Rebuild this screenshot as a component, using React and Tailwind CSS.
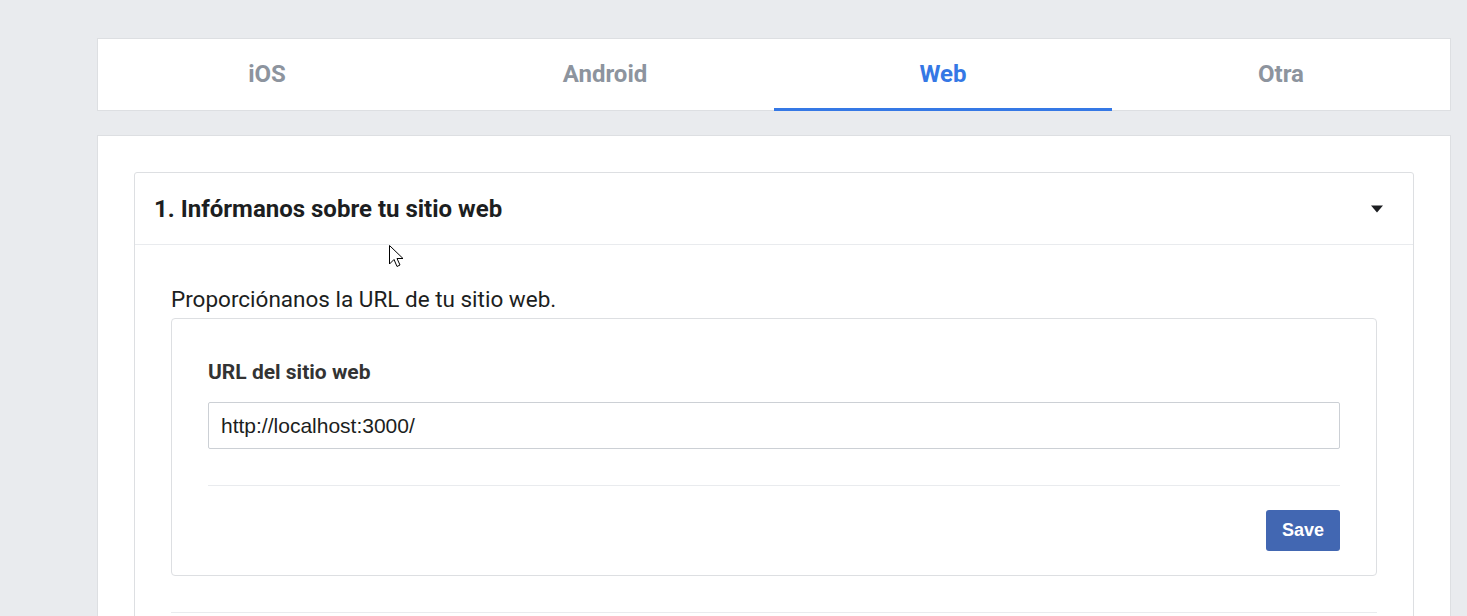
import React from "react";

export default function App() {
  const tabs = ["iOS", "Android", "Web", "Otra"];
  return (
    <div className="relative w-[1467px] h-[616px] overflow-hidden bg-[#e9ebee] font-['Roboto',sans-serif]">
      <div className="pt-[38px] pl-[97px] pr-[16px]">
        <div className="flex h-[73px] border border-[#dddfe2] bg-white">
          {tabs.map((t) => (
            <div
              key={t}
              className={
                "flex-1 -mb-px flex items-center justify-center text-[24px] leading-[28px] font-bold border-b-[3px] " +
                (t === "Web" ? "text-[#3578e5] border-[#3578e5]" : "text-[#8d949e] border-transparent")
              }
            >
              <span>{t}</span>
            </div>
          ))}
        </div>
        <div className="mt-[24px] h-[600px] border border-[#dddfe2] bg-white px-[36px] pt-[36px]">
          <div className="border border-[#dddfe2] rounded-[3px] h-[600px]">
            <div className="flex items-center justify-between h-[72px] pl-[19px] pr-[29px] border-b border-[#e9ebee]">
              <span className="text-[24px] leading-[28px] font-bold text-[#1c1e21]">1. Infórmanos sobre tu sitio web</span>
              <svg width="14" height="8" viewBox="0 0 14 8">
                <path d="M1 0.5 L13 0.5 L7 7.5 Z" fill="#1c1e21" />
              </svg>
            </div>
            <div className="px-[36px] pt-[40px]">
              <div className="text-[22.5px] text-[#1c1e21] leading-[28px]">Proporciónanos la URL de tu sitio web.</div>
              <div className="mt-[5px] border border-[#dddfe2] rounded-[4px] px-[36px] pt-[41px] pb-[24px]">
                <div className="text-[21px] font-bold text-[#333] leading-[24px]">URL del sitio web</div>
                <input
                  readOnly
                  value="http://localhost:3000/"
                  className="mt-[18px] block w-full h-[47px] border border-[#ccd0d5] rounded-[2px] px-[12px] text-[21px] text-[#1c1e21] font-['Liberation_Sans',Arial,sans-serif] outline-none"
                />
                <div className="mt-[36px] border-t border-[#e9ebee]"></div>
                <div className="flex justify-end mt-[24px]">
                  <button className="h-[41px] w-[74px] rounded-[3px] bg-[#4267b2] text-white text-[18px] font-bold font-['Liberation_Sans',Arial,sans-serif]">
                    Save
                  </button>
                </div>
              </div>
              <div className="mt-[36px] border-t border-[#e9ebee]"></div>
            </div>
          </div>
        </div>
      </div>
      <svg className="absolute left-[389px] top-[245px]" width="20" height="28" viewBox="0 0 20 28">
        <path d="M0.5 0.5 L0.5 19 L5 14.5 L8 21.5 L11 20 L8 13.5 L14 13.5 Z" fill="white" stroke="black" strokeWidth="1" />
      </svg>
    </div>
  );
}
